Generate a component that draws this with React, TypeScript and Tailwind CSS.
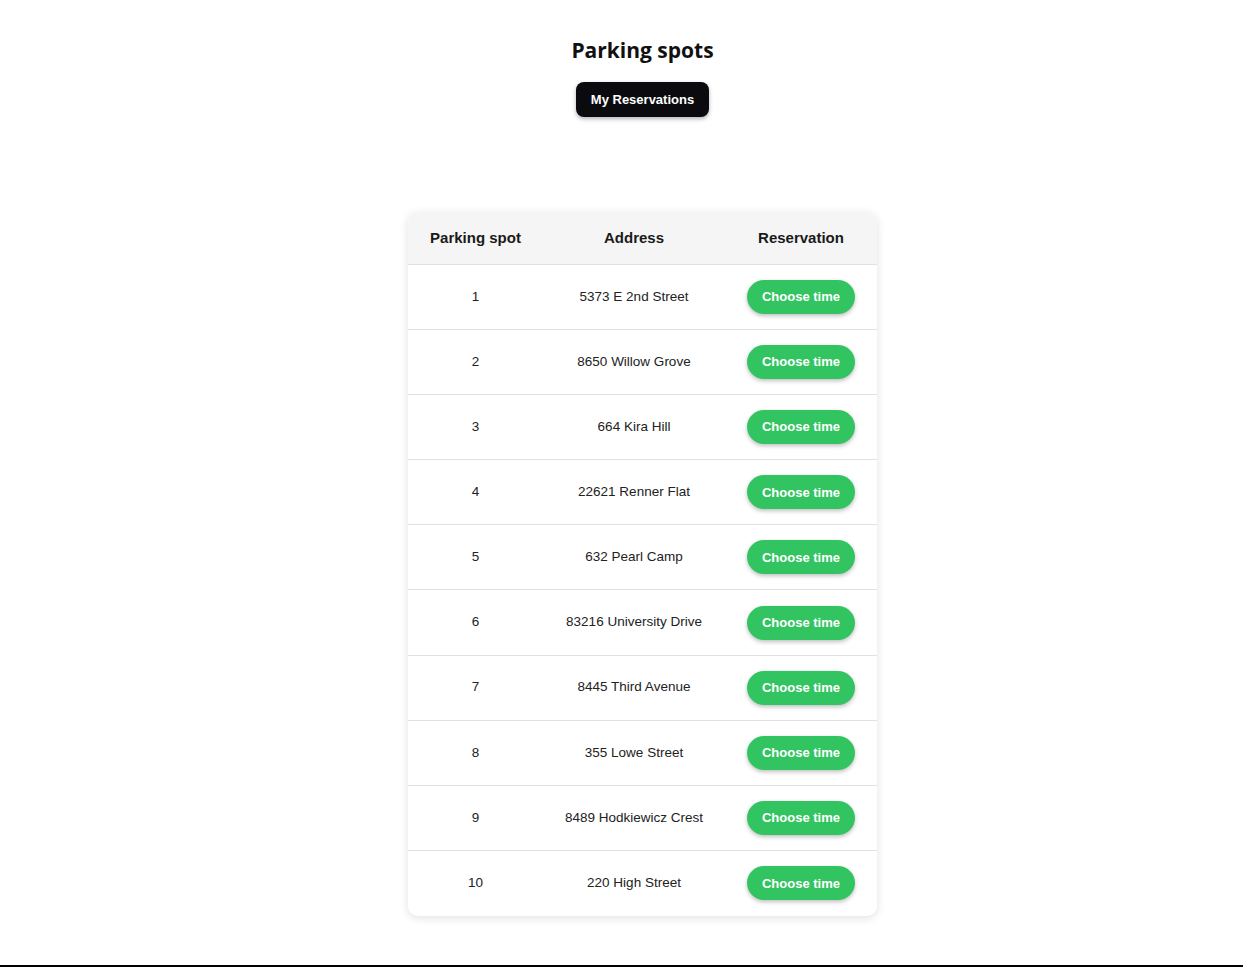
import React from "react";

const spots = [
    { id: 1, address: "5373 E 2nd Street" },
    { id: 2, address: "8650 Willow Grove" },
    { id: 3, address: "664 Kira Hill" },
    { id: 4, address: "22621 Renner Flat" },
    { id: 5, address: "632 Pearl Camp" },
    { id: 6, address: "83216 University Drive" },
    { id: 7, address: "8445 Third Avenue" },
    { id: 8, address: "355 Lowe Street" },
    { id: 9, address: "8489 Hodkiewicz Crest" },
    { id: 10, address: "220 High Street" },
];

const App = () => {
    return (
        <main className="h-[967px] border-b-2 border-black bg-white pl-[42px] font-['Liberation_Sans',Arial,sans-serif]">
            <section className="flex flex-col items-center pt-[35px]">
                <h1 className="font-['Open_Sans','Noto_Sans',sans-serif] text-[21px] font-bold leading-[30px] text-[#111]">
                    Parking spots
                </h1>
                <button className="mt-[17px] h-[35px] w-[133px] rounded-[8px] bg-[#0b0b0f] text-[13px] font-bold text-white shadow-[0_2px_4px_rgba(0,0,0,0.3)]">
                    My Reservations
                </button>
            </section>
            <section className="flex justify-center pt-[95px]">
                <div className="w-[469px] overflow-hidden rounded-[10px] bg-white shadow-[0_2px_10px_rgba(0,0,0,0.12)]">
                    <div className="grid h-[53px] grid-cols-[135px_182px_152px] items-center border-b border-[#e0e0e0] bg-[#f5f5f5] text-center text-[15px] font-bold text-[#1a1a1a]">
                        <p>Parking spot</p>
                        <p>Address</p>
                        <p>Reservation</p>
                    </div>
                    {spots.map((spot, i) => (
                        <div
                            key={spot.id}
                            className={`grid h-[65.1px] grid-cols-[135px_182px_152px] items-center text-center text-[13.5px] text-[#222] ${
                                i < spots.length - 1 ? "border-b border-[#e0e0e0]" : ""
                            }`}
                        >
                            <p>{spot.id}</p>
                            <p>{spot.address}</p>
                            <div className="flex justify-center">
                                <button className="h-[34px] w-[108px] rounded-full bg-[#33c462] text-[13px] font-bold text-white shadow-[0_2px_4px_rgba(0,0,0,0.25)]">
                                    Choose time
                                </button>
                            </div>
                        </div>
                    ))}
                </div>
            </section>
        </main>
    );
};

export default App;
